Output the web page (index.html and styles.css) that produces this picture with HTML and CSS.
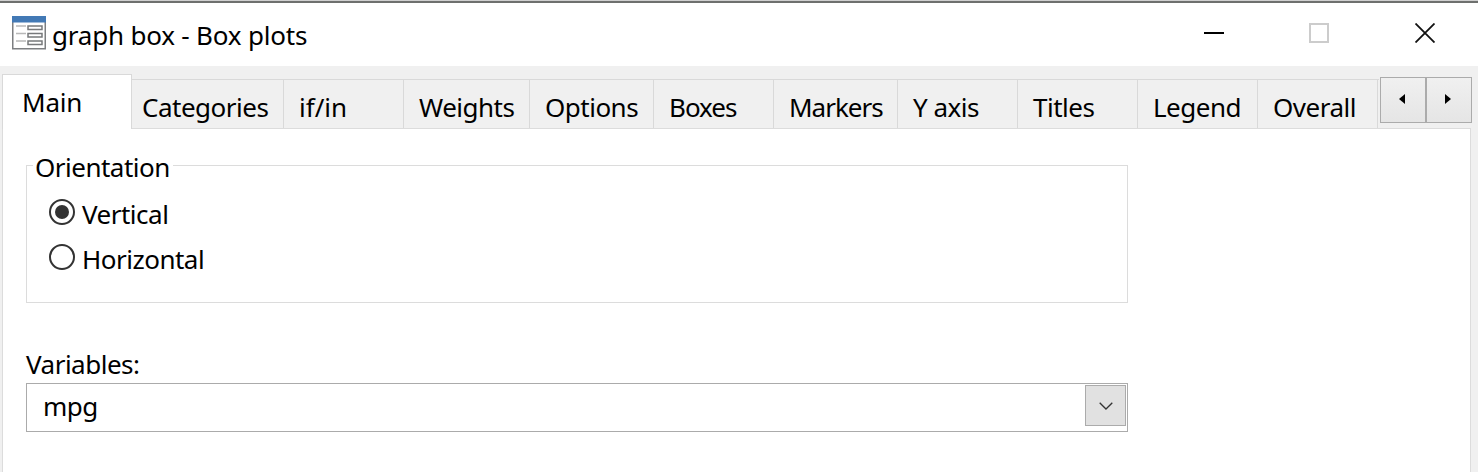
FILE: index.html
```html
<!DOCTYPE html>
<html lang="en">
<head>
    <meta charset="UTF-8">
    <title>graph box - Box plots</title>
    <link rel="stylesheet" href="styles.css">
</head>
<body>
    <div class="window">
        <header class="titlebar">
            <svg class="app-icon" width="34" height="34" viewBox="0 0 34 34">
                <rect x="0.75" y="0.75" width="32.5" height="32" fill="#fff" stroke="#7d7f81" stroke-width="1.5"/>
                <rect x="0" y="0" width="34" height="6.5" fill="#4279b5"/>
                <path d="M4 10h10M4 17.5h10M4 25h10" stroke="#b8b8b8" stroke-width="1.5"/>
                <path d="M16 10h14v3.500h-14zM16 17.500h14v3.500h-14zM16 25h14v3.500h-14z" fill="#fff" stroke="#77797b" stroke-width="1.5"/>
            </svg>
            <h1 class="title">graph box - Box plots</h1>
            <div class="window-buttons">
                <svg width="20" height="20" viewBox="0 0 20 20"><path d="M0 10h20" stroke="#000" stroke-width="2"/></svg>
                <svg width="20" height="20" viewBox="0 0 20 20"><rect x="1" y="1" width="18" height="18" fill="none" stroke="#ccc" stroke-width="2"/></svg>
                <svg width="20" height="20" viewBox="0 0 20 20"><path d="M0.500 0.500l19 19M19.500 0.500l-19 19" stroke="#111" stroke-width="1.800"/></svg>
            </div>
        </header>

        <nav class="tabs">
            <div class="tab active"><span>Main</span></div>
            <div class="tab categories"><span>Categories</span></div>
            <div class="tab if-in"><span>if/in</span></div>
            <div class="tab weights"><span>Weights</span></div>
            <div class="tab options"><span>Options</span></div>
            <div class="tab boxes"><span>Boxes</span></div>
            <div class="tab markers"><span>Markers</span></div>
            <div class="tab"><span>Y axis</span></div>
            <div class="tab"><span>Titles</span></div>
            <div class="tab"><span>Legend</span></div>
            <div class="tab"><span>Overall</span></div>
            <div class="tab-end"></div>
            <div class="spinner">
                <button type="button" aria-label="Previous"><svg width="6" height="10" viewBox="0 0 6 10"><path d="M6 0v10L0 5z"/></svg></button>
                <button type="button" aria-label="Next"><svg width="6" height="10" viewBox="0 0 6 10"><path d="M0 0v10l6-5z"/></svg></button>
            </div>
        </nav>

        <main class="panel">
            <section class="group">
                <h2 class="group-title"><span>Orientation</span></h2>
                <div class="radio checked"><i></i><span>Vertical</span></div>
                <div class="radio"><i></i><span>Horizontal</span></div>
            </section>
            <div class="label"><span>Variables:</span></div>
            <div class="combo">
                <span class="value">mpg</span>
                <button type="button" aria-label="Open list"><svg width="14" height="8" viewBox="0 0 14 8"><path d="M0.700 0.700L7 7l6.300-6.300" fill="none" stroke="#333" stroke-width="1.300"/></svg></button>
            </div>
        </main>
    </div>
</body>
</html>
```

FILE: styles.css
```css
* {
    box-sizing: border-box;
    margin: 0;
    padding: 0;
}

body {
    font-family: "Noto Sans", "Open Sans", sans-serif;
    font-size: 26px;
    line-height: 36px;
    color: #000;
    background: #f0f0f0;
    overflow: hidden;
}

h1,
h2 {
    font-size: inherit;
    font-weight: normal;
}

span {
    white-space: nowrap;
    letter-spacing: -0.5px;
}

.window {
    display: flex;
    flex-direction: column;
    height: 472px;
    border-top: 1px solid #d0d0d0;
}

/* title bar */
.titlebar {
    display: flex;
    height: 65px;
    padding: 0 43px 0 12px;
    border-top: 2px solid #6e706e;
    background: #fff;
}

.app-icon {
    margin-top: 13px;
}

.title {
    margin: 14px 0 0 6px;
    white-space: nowrap;
    letter-spacing: -0.2px;
}

.window-buttons {
    display: flex;
    gap: 86px;
    margin: 20px 0 0 auto;
}

.window-buttons svg:first-child {
    margin-right: -1px;
}

/* tabs */
.tabs {
    display: flex;
    align-items: flex-end;
    height: 62px;
    padding-left: 2px;
}

.tab {
    width: 120px;
    height: 49px;
    padding: 9px 0 0 15px;
    border-top: 1px solid #d9d9d9;
    border-left: 1px solid #d9d9d9;
}

.tab.active {
    z-index: 1;
    width: 130px;
    height: 55px;
    margin-bottom: -1px;
    padding: 9px 0 0 19px;
    border-right: 1px solid #d9d9d9;
    background: #fff;
}

.tab.categories {
    width: 151px;
    padding-left: 10px;
    border-left: none;
}

.tab.weights {
    width: 126px;
}

.tab.options,
.tab.markers {
    width: 124px;
}

.tab.if-in span {
    letter-spacing: 0;
}

.tab.active span {
    letter-spacing: -0.2px;
}

.tab.boxes span,
.tab.markers span {
    letter-spacing: -1px;
}

.tab-end {
    width: 2px;
    height: 49px;
    border-top: 1px solid #d9d9d9;
    border-left: 1px solid #d9d9d9;
}

.spinner {
    display: flex;
    align-self: flex-start;
    margin: 11px 0 0 1px;
}

.spinner button {
    width: 46px;
    height: 46px;
    padding: 0 2px 3px 0;
    border: 1px solid #ababab;
    background: linear-gradient(#f0f0f0, #e5e5e5);
    line-height: 0;
}

/* panel */
.panel {
    flex: 1;
    margin: 0 7px 0 2px;
    padding: 36px 0 0 23px;
    border: 1px solid #dcdcdc;
    border-bottom: none;
    background: #fff;
}

.group {
    width: 1102px;
    height: 138px;
    padding-left: 22px;
    border: 1px solid #dcdcdc;
}

.group-title {
    width: 140px;
    height: 36px;
    margin: -17px 0 0 -16px;
    padding-left: 2px;
    background: #fff;
}

.radio {
    display: flex;
    align-items: center;
    height: 45px;
    padding-top: 4px;
}

.group-title + .radio {
    margin-top: 4px;
}

.radio i {
    width: 26px;
    height: 26px;
    margin: -3px 7px 0 0;
    border: 2px solid #333;
    border-radius: 50%;
}

.radio.checked i {
    padding: 4px;
    background: #333 content-box;
}

.label {
    margin-top: 43px;
}

.combo {
    display: flex;
    justify-content: space-between;
    width: 1102px;
    height: 49px;
    margin-top: 1px;
    padding: 1px 1px 0 16px;
    border: 1px solid #ababab;
}

.value {
    padding-top: 3px;
}

.combo button {
    width: 41px;
    height: 41px;
    border: 1px solid #ababab;
    background: #e1e1e1;
    line-height: 0;
}
```
